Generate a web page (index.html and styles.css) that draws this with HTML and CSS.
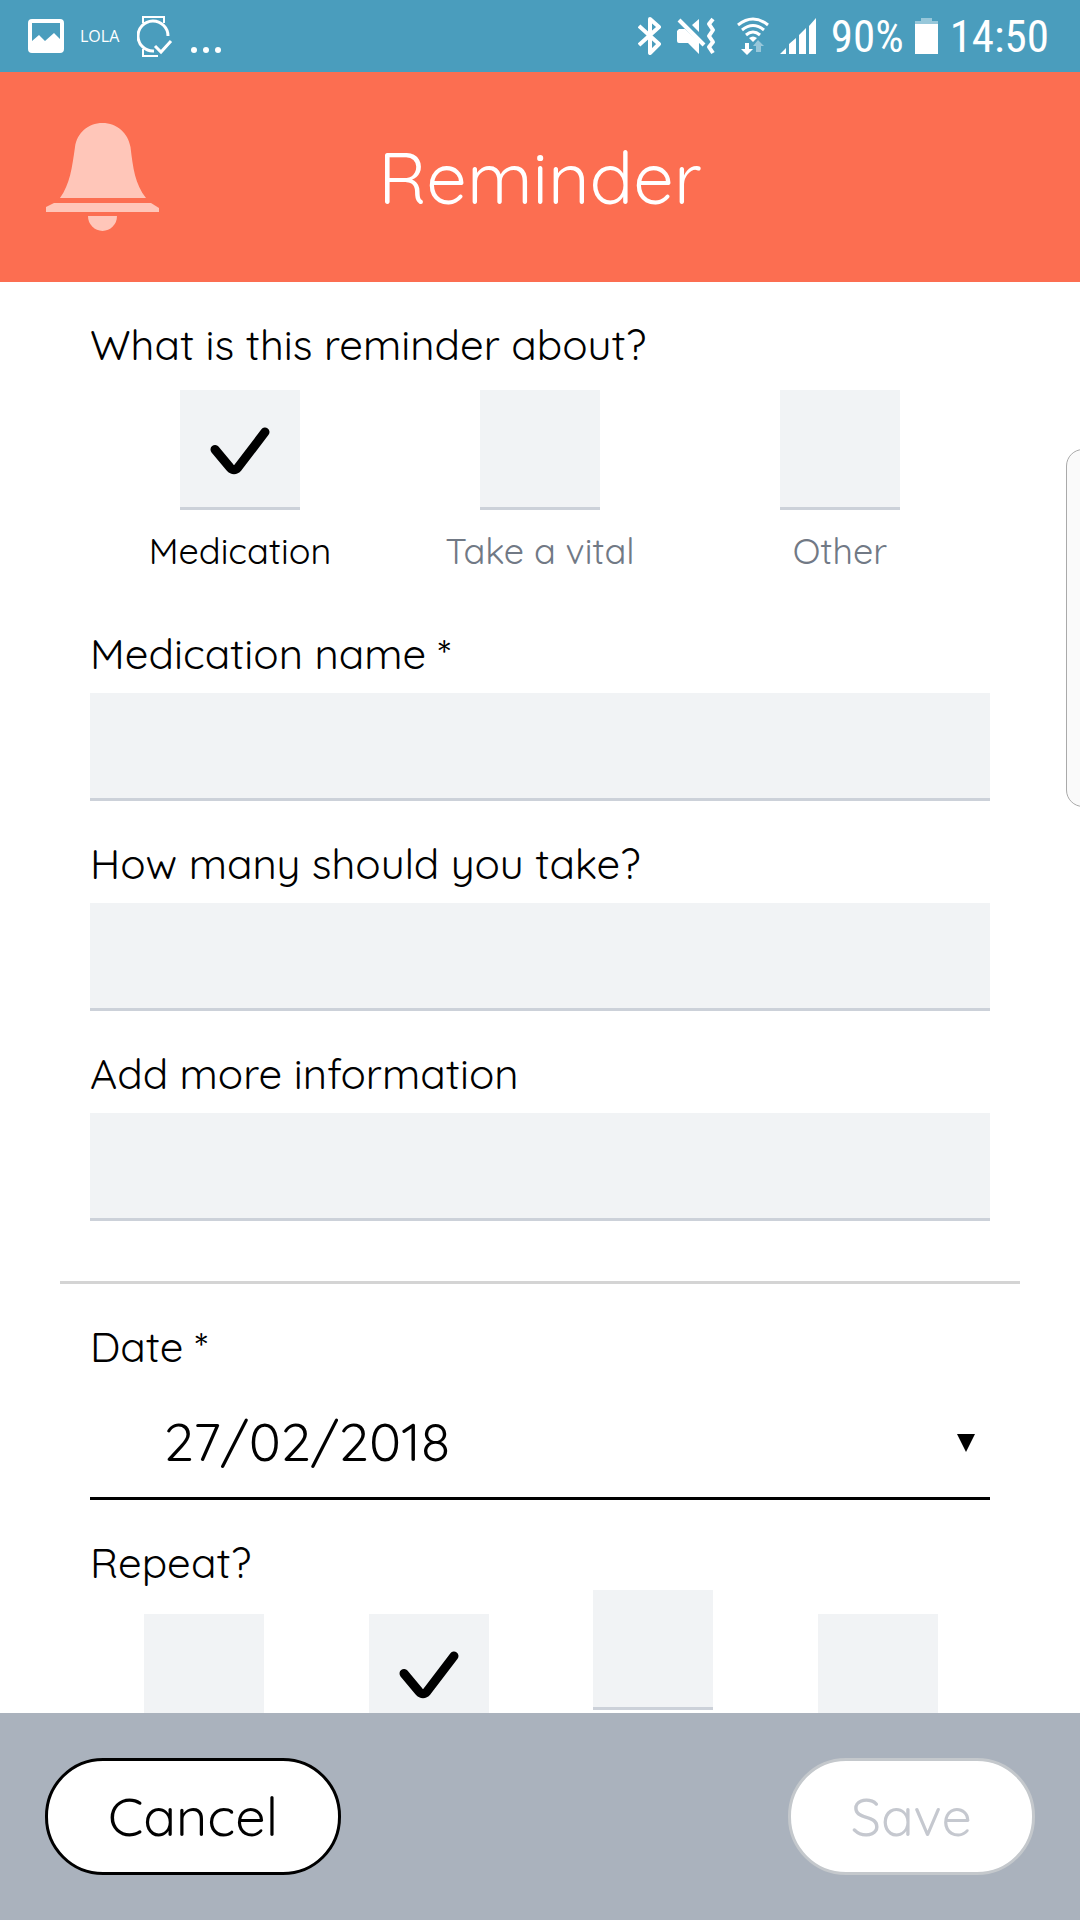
FILE: index.html
```html
<!DOCTYPE html>
<html lang="en">
<head>
  <meta charset="UTF-8">
  <meta name="viewport" content="width=device-width, initial-scale=1.0">
  <title>Reminder</title>
  <link rel="stylesheet" href="styles.css">
</head>
<body>
  <div class="status-bar">
    <div class="status-group">
      <svg width="36" height="36" viewBox="0 0 36 36">
        <path fill="#fff" fill-rule="evenodd" d="M4 1h28a4 4 0 0 1 4 4v26a4 4 0 0 1-4 4H4a4 4 0 0 1-4-4V5a4 4 0 0 1 4-4zM4 5v18l7-6 6 6 9-8 6 6V5z"/>
      </svg>
      <span class="status-app">LOLA</span>
      <svg width="36" height="44" viewBox="0 0 36 44" fill="none" stroke="#fff" stroke-width="2">
        <path d="M6 9V3h21v6M6 35v7h15"/>
        <path d="M17 37A15 15 0 1 1 31 22" stroke-width="3"/>
        <path d="M18 32l6 6 10-11" stroke-width="3"/>
      </svg>
      <svg width="48" height="44" viewBox="0 0 48 44" fill="#fff">
        <circle cx="10" cy="36" r="3"/>
        <circle cx="22" cy="36" r="3"/>
        <circle cx="34" cy="36" r="3"/>
      </svg>
    </div>
    <div class="status-group">
      <svg width="28" height="38" viewBox="0 0 28 38" fill="none" stroke="#fff" stroke-width="4" stroke-linejoin="round">
        <path d="M1 9l20 18-9 9V2l9 8L1 28"/>
      </svg>
      <svg width="49" height="38" viewBox="0 0 49 38" fill="none" stroke="#fff">
        <path fill="#fff" stroke="none" d="M2 12h6l14 13v12L11 26H2a2 2 0 0 1-2-2V14zM22 2v13l-7-7z"/>
        <path d="M2 3l25 25" stroke-width="4"/>
        <path d="M36 2l-4 5 4 6-4 6 4 6-4 5 4 6" stroke-width="4" stroke-linejoin="round"/>
      </svg>
      <svg width="32" height="38" viewBox="0 0 32 38" fill="none" stroke="#fff" stroke-width="3">
        <path d="M1 8q15-12 30 0M5 13q11-9 22 0M9 18q7-6 14 0"/>
        <path fill="#fff" stroke="none" d="M12 21q4-3 8 0l-4 4zM8 26h4v6h4l-6 6-6-6h4z"/>
        <path fill="#97c7da" stroke="none" d="M19 35v-6h-3l5-6 6 6h-3v6z"/>
      </svg>
      <svg width="40" height="38" viewBox="0 0 40 38" fill="#fff">
        <path d="M0 37l6-6v6zM9 37V27l7-6v16zM19 37V18l7-7v26zM29 37V9l7-8v36z"/>
      </svg>
      <span class="status-text">90%</span>
      <svg width="24" height="38" viewBox="0 0 24 38">
        <path fill="#97c7da" d="M6 1h11v3h6v4H0V4h6z"/>
        <path fill="#fff" d="M0 7h23v30H0z"/>
      </svg>
      <span class="status-text">14:50</span>
    </div>
  </div>

  <header class="header">
    <svg class="bell" width="116" height="110" viewBox="0 0 116 110" fill="#ffc6b9">
      <path d="M15 76C25 62 27 46 30 25C32 11 43 1 57.500 1S83 11 85.500 25C88 46 90 62 101 76z"/>
      <path d="M9 81h97l8 5v4H1v-5z"/>
      <path d="M43 94h29a14.500 15 0 0 1-29 0z"/>
    </svg>
    <h1 class="title">Reminder</h1>
  </header>

  <main class="content">
    <form class="form" id="reminder-form">
      <fieldset class="group">
        <legend class="label">What is this reminder about?</legend>
        <div class="choices about">
          <label class="choice">
            <span class="tick">
              <input type="radio" name="about" checked>
              <svg width="120" height="120" viewBox="0 0 120 120"><path d="M35 59.500L50 77.500Q54 82 58 77.500L85 42"/></svg>
            </span>
            <span class="choice-text">Medication</span>
          </label>
          <label class="choice">
            <span class="tick">
              <input type="radio" name="about">
              <svg width="120" height="120" viewBox="0 0 120 120"><path d="M35 59.500L50 77.500Q54 82 58 77.500L85 42"/></svg>
            </span>
            <span class="choice-text">Take a vital</span>
          </label>
          <label class="choice">
            <span class="tick">
              <input type="radio" name="about">
              <svg width="120" height="120" viewBox="0 0 120 120"><path d="M35 59.500L50 77.500Q54 82 58 77.500L85 42"/></svg>
            </span>
            <span class="choice-text">Other</span>
          </label>
        </div>
      </fieldset>

      <div class="field">
        <label class="label" for="name">Medication name *</label>
        <input class="text-input" type="text" id="name">
      </div>
      <div class="field">
        <label class="label" for="amount">How many should you take?</label>
        <input class="text-input" type="text" id="amount">
      </div>
      <div class="field">
        <label class="label" for="info">Add more information</label>
        <input class="text-input" type="text" id="info">
      </div>

      <hr class="divider">

      <div class="field">
        <label class="label" for="date">Date *</label>
        <div class="select-box">
          <select class="select" id="date">
            <option>27/02/2018</option>
          </select>
          <svg class="arrow" width="18" height="18" viewBox="0 0 18 18"><path d="M0 0h18L9 18z"/></svg>
        </div>
      </div>

      <fieldset class="group">
        <legend class="label">Repeat?</legend>
        <div class="choices repeat">
          <label class="tick">
            <input type="radio" name="repeat" aria-label="Never">
            <svg width="120" height="120" viewBox="0 0 120 120"><path d="M35 59.500L50 77.500Q54 82 58 77.500L85 42"/></svg>
          </label>
          <label class="tick">
            <input type="radio" name="repeat" aria-label="Daily" checked>
            <svg width="120" height="120" viewBox="0 0 120 120"><path d="M35 59.500L50 77.500Q54 82 58 77.500L85 42"/></svg>
          </label>
          <label class="tick tick-raised">
            <input type="radio" name="repeat" aria-label="Every other day">
            <svg width="120" height="120" viewBox="0 0 120 120"><path d="M35 59.500L50 77.500Q54 82 58 77.500L85 42"/></svg>
          </label>
          <label class="tick">
            <input type="radio" name="repeat" aria-label="Weekly">
            <svg width="120" height="120" viewBox="0 0 120 120"><path d="M35 59.500L50 77.500Q54 82 58 77.500L85 42"/></svg>
          </label>
        </div>
      </fieldset>
    </form>
  </main>

  <footer class="footer">
    <button class="button" type="button">Cancel</button>
    <button class="button" type="submit" form="reminder-form" disabled>Save</button>
  </footer>

  <div class="edge-handle"></div>
</body>
</html>
```

FILE: styles.css
```css
* {
  box-sizing: border-box;
}

body {
  display: flex;
  flex-direction: column;
  height: 100vh;
  margin: 0;
  overflow: hidden;
  font-family: Quicksand, Lato, sans-serif;
  font-weight: 370;
  color: #000;
  background-color: #fff;
}

svg {
  display: block;
  flex-shrink: 0;
}

.status-bar {
  display: flex;
  justify-content: space-between;
  flex-shrink: 0;
  height: 72px;
  padding: 0 31px 0 28px;
  color: #fff;
  background-color: #4a9dbd;
}

.status-group {
  display: flex;
  align-items: center;
  gap: 11px;
}

.status-app {
  padding: 0 7px 0 5px;
  font-family: "Open Sans", sans-serif;
  font-size: 16px;
  font-weight: 400;
}

.status-text {
  padding-top: 2px;
  font-family: "Roboto Condensed", "Liberation Sans Narrow", Roboto, sans-serif;
  font-size: 45px;
  font-weight: 400;
  line-height: 70px;
}

.header {
  display: grid;
  grid-template-columns: 116px 1fr 116px;
  align-items: center;
  flex-shrink: 0;
  height: 210px;
  padding: 0 45px;
  background-color: #fc6e51;
}

.title {
  margin: 0;
  font-size: 72px;
  font-weight: inherit;
  text-align: center;
  color: #fff;
}

.content {
  flex: 1;
  min-height: 0;
  overflow: hidden;
  padding: 0 60px;
}

.form {
  padding: 38px 30px;
}

.group {
  margin: 0;
  padding: 0;
  border: none;
}

.label {
  display: block;
  padding: 0;
  font-size: 42px;
  line-height: 50px;
}

.choices {
  display: grid;
  justify-items: center;
}

.about {
  grid-template-columns: repeat(3, 1fr);
  padding: 20px 0 55px;
}

.repeat {
  grid-template-columns: repeat(4, 1fr);
  padding: 26px 0 0 2px;
}

.choice {
  display: flex;
  flex-direction: column;
  align-items: center;
  gap: 18px;
}

.choice-text {
  font-size: 36px;
  line-height: 46px;
  color: #717985;
}

.choice:has(input:checked) .choice-text {
  color: #000;
}

.tick {
  display: grid;
}

.tick-raised {
  margin-top: -24px;
}

.tick input,
.tick svg {
  grid-area: 1 / 1;
}

.tick input {
  width: 120px;
  height: 120px;
  margin: 0;
  appearance: none;
  background-color: #f1f3f5;
  border-bottom: 3px solid #ccd1d9;
}

.tick svg {
  visibility: hidden;
  fill: none;
  stroke: #000;
  stroke-width: 9;
  stroke-linecap: round;
  pointer-events: none;
}

.tick input:checked + svg {
  visibility: visible;
}

.field {
  display: flex;
  flex-direction: column;
  gap: 14px;
  margin-bottom: 38px;
}

.text-input {
  width: 100%;
  height: 108px;
  padding: 0 24px;
  font: inherit;
  font-size: 42px;
  border: none;
  border-bottom: 3px solid #ccd1d9;
  border-radius: 0;
  background-color: #f1f3f5;
}

.divider {
  margin: 60px -30px 38px;
  border: none;
  border-top: 3px solid #d4d4d4;
}

.select-box {
  position: relative;
}

.select {
  display: block;
  width: 100%;
  height: 114px;
  padding: 0 74px 2px;
  font: inherit;
  font-size: 54px;
  color: #000;
  appearance: none;
  border: none;
  border-bottom: 3px solid #000;
  border-radius: 0;
  background-color: #fff;
}

.arrow {
  position: absolute;
  top: 48px;
  right: 15px;
  pointer-events: none;
}

.footer {
  display: flex;
  justify-content: space-between;
  flex-shrink: 0;
  padding: 45px;
  background-color: #aab2bd;
}

.button {
  height: 117px;
  padding: 0 60px 2px;
  font: inherit;
  font-size: 54px;
  color: #000;
  border: 3px solid #000;
  border-radius: 58px;
  background-color: #fff;
}

.button:disabled {
  color: #c5c8cf;
  border-color: #c4c8cc;
}

/* Pull-out handle of the phone's edge panel */
.edge-handle {
  position: absolute;
  top: 449px;
  right: -20px;
  width: 34px;
  height: 358px;
  border: 1px solid #aaa;
  border-radius: 20px;
  background-color: #fafafa;
}
```
